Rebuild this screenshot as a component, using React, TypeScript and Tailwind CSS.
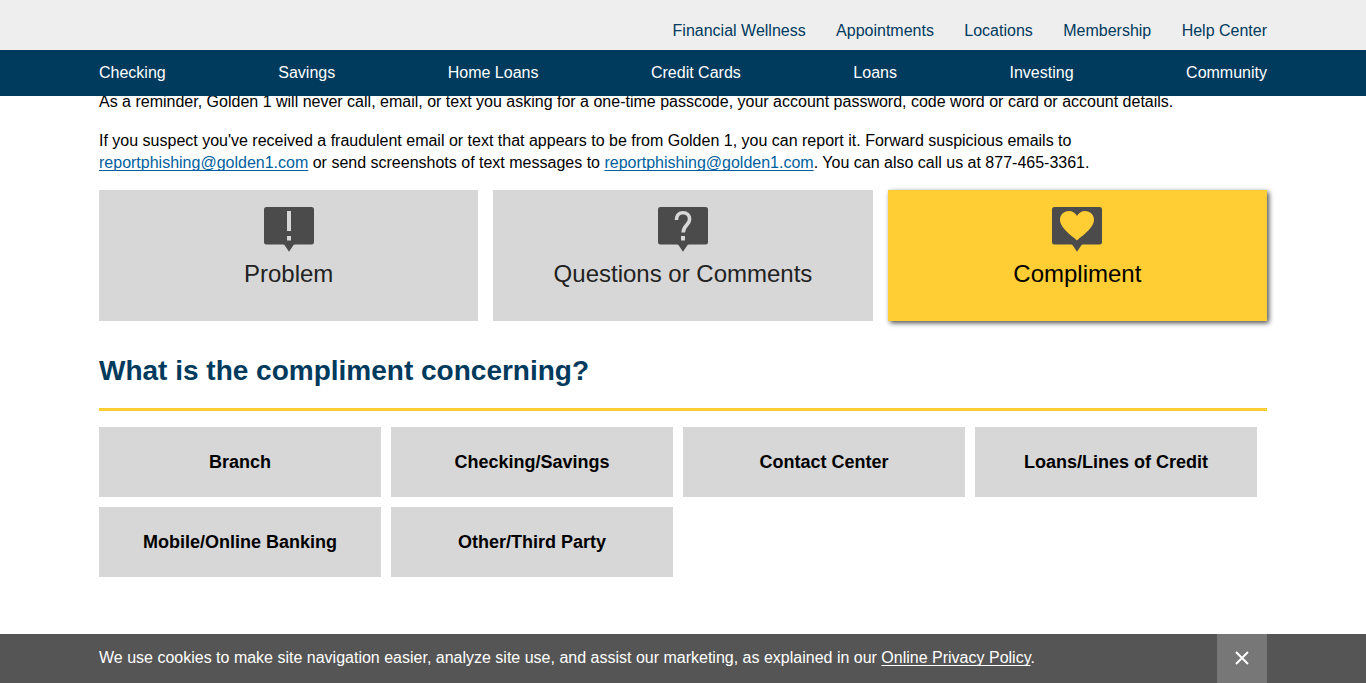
import type { ReactNode } from "react";

const topLinks = ["Financial Wellness", "Appointments", "Locations", "Membership", "Help Center"];
const navLinks = ["Checking", "Savings", "Home Loans", "Credit Cards", "Loans", "Investing", "Community"];
const topics = [
  "Branch",
  "Checking/Savings",
  "Contact Center",
  "Loans/Lines of Credit",
  "Mobile/Online Banking",
  "Other/Third Party",
];

function Bubble({ children }: { children: ReactNode }) {
  return (
    <svg width="50" height="45" viewBox="0 0 50 45" fill="none" className="block">
      <path
        d="M2.5 0H47.5Q50 0 50 2.5V35Q50 37.5 47.5 37.5H31Q29.7 37.5 29 38.8L25 44.8L21 38.8Q20.3 37.5 19 37.5H2.5Q0 37.5 0 35V2.5Q0 0 2.5 0Z"
        fill="#4b4b4b"
      />
      {children}
    </svg>
  );
}

function Card({ label, icon, active = false }: { label: string; icon: ReactNode; active?: boolean }) {
  return (
    <button
      type="button"
      className={
        active
          ? "flex h-[131px] flex-col items-center bg-[#ffcd34] pt-[17px] text-black shadow-[2px_2px_5px_0px_rgba(0,0,0,0.7)]"
          : "flex h-[131px] flex-col items-center bg-[#d7d7d7] pt-[17px] text-[#222222]"
      }
    >
      <Bubble>{icon}</Bubble>
      <span className="mt-[5px] text-[24px] leading-[34px]">{label}</span>
    </button>
  );
}

function EmailLink() {
  return (
    <a
      href="#"
      className="text-[#005f9e] underline decoration-1 underline-offset-2 [text-decoration-skip-ink:none]"
    >
      reportphishing@golden1.com
    </a>
  );
}

export default function App() {
  return (
    <div className="flex h-[683px] flex-col overflow-hidden bg-white font-['Liberation_Sans',Arial,sans-serif] text-[16px] leading-[22px] text-black">
      <header className="relative z-10 shrink-0">
        <div className="h-[50px] bg-[#eeeeee]">
          <div className="mx-auto flex w-[1168px] justify-end gap-[30.4px] pt-[20px] text-[#003a5d]">
            {topLinks.map((l) => (
              <a href="#" key={l}>{l}</a>
            ))}
          </div>
        </div>
        <nav className="h-[46px] bg-[#003a5d]">
          <div className="mx-auto flex w-[1168px] justify-between pt-[12px] text-white">
            {navLinks.map((l) => (
              <a href="#" key={l}>{l}</a>
            ))}
          </div>
        </nav>
      </header>

      <main className="mx-auto -mt-[5px] w-[1168px] grow">
        <p>
          As a reminder, Golden 1 will never call, email, or text you asking for a one-time passcode, your account
          password, code word or card or account details.
        </p>
        <p className="mt-[17px]">
          If you suspect you've received a fraudulent email or text that appears to be from Golden 1, you can report
          it. Forward suspicious emails to
          <br />
          <EmailLink /> or send screenshots of text messages to <EmailLink />. You can also call us at 877-465-3361.
        </p>

        <div className="mt-[16px] grid grid-cols-3 gap-[15px]">
          <Card
            label="Problem"
            icon={<path d="M23 4H27V24H23ZM23 29H27V33.5H23Z" fill="#d7d7d7" />}
          />
          <Card
            label="Questions or Comments"
            icon={
              <>
                <path
                  d="M18.4 13C18.4 8.5 21 5.8 25 5.8C29 5.8 31.6 8.3 31.6 12.2C31.6 17.8 25.2 18.5 25.2 25.5"
                  stroke="#d7d7d7"
                  strokeWidth="3.6"
                />
                <path d="M23 29H27V33.5H23Z" fill="#d7d7d7" />
              </>
            }
          />
          <Card
            active
            label="Compliment"
            icon={
              <path
                d="M25 33.5C21 29.5 8 21.5 8 12.8C8 7.8 12 4 16.8 4C20.5 4 23.6 6 25 9C26.4 6 29.5 4 33.2 4C38 4 42 7.8 42 12.8C42 21.5 29 29.5 25 33.5Z"
                fill="#ffcd34"
              />
            }
          />
        </div>

        <h2 className="mt-[30px] border-b-[3px] border-[#ffcd34] pb-[17px] text-[28px] leading-[40px] font-bold text-[#003a5d]">
          What is the compliment concerning?
        </h2>

        <div className="mt-4 flex flex-wrap gap-[10px]">
          {topics.map((t) => (
            <button type="button" key={t} className="h-[70px] w-[282px] bg-[#d7d7d7] text-[18px] font-bold">
              {t}
            </button>
          ))}
        </div>
      </main>

      <footer className="h-[49px] shrink-0 bg-[#555555] text-white">
        <div className="mx-auto flex h-full w-[1168px] justify-between">
          <p className="pt-[13px]">
            We use cookies to make site navigation easier, analyze site use, and assist our marketing, as explained in
            our{" "}
            <a href="#" className="underline decoration-1 underline-offset-2 [text-decoration-skip-ink:none]">
              Online Privacy Policy
            </a>
            .
          </p>
          <button
            type="button"
            aria-label="Close"
            className="flex h-full w-[50px] items-center justify-center bg-[#777777] pb-[1px]"
          >
            <svg width="14" height="14" viewBox="0 0 14 14" stroke="#ffffff" strokeWidth="2" className="block">
              <path d="M1 1L13 13M13 1L1 13" />
            </svg>
          </button>
        </div>
      </footer>
    </div>
  );
}
